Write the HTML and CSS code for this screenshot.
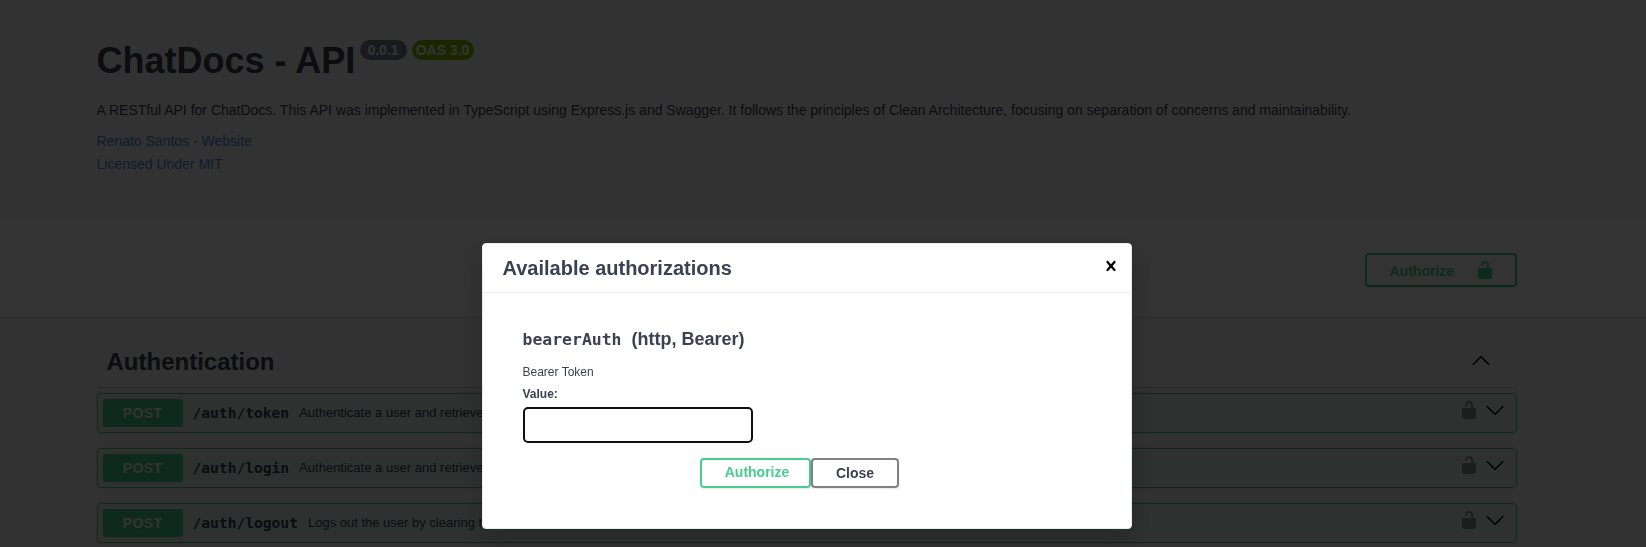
FILE: index.html
```html
<!DOCTYPE html>
<html lang="en">
<head>
<meta charset="utf-8">
<title>ChatDocs - API</title>
<link rel="stylesheet" href="styles.css">
</head>
<body>
<svg width="0" height="0" class="sprite">
  <symbol id="unlocked" viewBox="0 0 20 20"><path d="M15.8 8H14V5.6C14 2.703 12.665 1 10 1 7.334 1 6 2.703 6 5.6V6h2v-.801C8 3.754 8.797 3 10 3c1.203 0 2 .754 2 2.199V8H4c-.553 0-1 .646-1 1.199V17c0 .549.428 1.139.951 1.307l1.197.387C5.672 18.861 6.55 19 7.1 19h5.8c.549 0 1.428-.139 1.951-.307l1.196-.387c.524-.167.953-.757.953-1.306V9.199C17 8.646 16.352 8 15.8 8z"/></symbol>
  <symbol id="arrow-down" viewBox="0 0 20 20"><path d="M17.418 6.109c.272-.268.709-.268.979 0s.271.701 0 .969l-7.908 7.83c-.27.268-.707.268-.979 0l-7.908-7.83c-.27-.268-.27-.701 0-.969.271-.268.709-.268.979 0L10 13.25l7.418-7.141z"/></symbol>
  <symbol id="arrow-up" viewBox="0 0 20 20"><path d="M17.418 14.908c.272.27.709.27.979 0s.271-.697 0-.969l-7.908-7.83c-.27-.268-.707-.268-.979 0l-7.908 7.83c-.27.27-.27.701 0 .969.271.268.709.268.979 0L10 7.767l7.418 7.141z"/></symbol>
  <symbol id="close" viewBox="0 0 20 20"><path d="M14.348 14.849c-.469.469-1.229.469-1.697 0L10 11.819l-2.651 3.029c-.469.469-1.229.469-1.697 0-.469-.469-.469-1.229 0-1.697l2.758-3.15-2.759-3.152c-.469-.469-.469-1.228 0-1.697.469-.469 1.228-.469 1.697 0L10 8.183l2.651-3.031c.469-.469 1.228-.469 1.697 0 .469.469.469 1.229 0 1.697l-2.758 3.152 2.758 3.15c.469.469.469 1.229 0 1.698z"/></symbol>
</svg>
<div class="page">
  <header class="info wrapper">
    <div class="title-row">
      <h1 class="title">ChatDocs - API</h1>
      <span class="version">0.0.1</span>
      <span class="version oas">OAS 3.0</span>
    </div>
    <p class="description">A RESTful API for ChatDocs. This API was implemented in TypeScript using Express.js and Swagger. It follows the principles of Clean Architecture, focusing on separation of concerns and maintainability.</p>
    <a class="link">Renato Santos - Website</a>
    <a class="link">Licensed Under MIT</a>
  </header>
  <section class="scheme">
    <div class="wrapper scheme-inner">
      <button class="btn authorize"><span>Authorize</span><svg class="icon"><use href="#unlocked"/></svg></button>
    </div>
  </section>
  <main class="wrapper operations">
    <div class="tag"><h2 class="tag-name">Authentication</h2><svg class="icon"><use href="#arrow-up"/></svg></div>
    <div class="opblock">
      <span class="method">POST</span><span class="path">/auth/token</span><span class="summary">Authenticate a user and retrieve a token</span>
      <svg class="icon lock"><use href="#unlocked"/></svg><svg class="icon"><use href="#arrow-down"/></svg>
    </div>
    <div class="opblock">
      <span class="method">POST</span><span class="path">/auth/login</span><span class="summary">Authenticate a user and retrieve a token</span>
      <svg class="icon lock"><use href="#unlocked"/></svg><svg class="icon"><use href="#arrow-down"/></svg>
    </div>
    <div class="opblock">
      <span class="method">POST</span><span class="path">/auth/logout</span><span class="summary">Logs out the user by clearing the token</span>
      <svg class="icon lock"><use href="#unlocked"/></svg><svg class="icon"><use href="#arrow-down"/></svg>
    </div>
  </main>
</div>
<div class="backdrop">
  <div class="modal">
    <div class="modal-header"><h3 class="modal-title">Available authorizations</h3><svg class="icon"><use href="#close"/></svg></div>
    <div class="modal-body">
      <h4 class="scheme-name"><code>bearerAuth</code><span>(http, Bearer)</span></h4>
      <p class="hint">Bearer Token</p>
      <label class="value-label" for="token">Value:</label>
      <input class="token" id="token" type="text">
      <div class="actions"><button class="btn modal-authorize">Authorize</button><button class="btn modal-close">Close</button></div>
    </div>
  </div>
</div>
</body>
</html>
```
FILE: styles.css
```css
* { box-sizing: border-box; }
html, body { height: 100%; }
body {
  margin: 0;
  overflow: hidden;
  background: #fafafa;
  color: #3b4151;
  font-family: "Liberation Sans", Arial, sans-serif;
}
h1, h2, h3, h4, p { margin: 0; }
.sprite { position: absolute; }
.icon { width: 20px; height: 20px; flex: none; }
.page { height: 547px; overflow: hidden; }
.wrapper { width: 1420px; margin-left: 96.5px; }

.info { height: 222px; padding-top: 38px; }
.title-row { display: flex; align-items: flex-start; height: 59px; }
.title { font-size: 36px; line-height: 44px; padding-top: 1px; white-space: nowrap; margin-right: 5px; width: 258px; }
.version {
  width: 47px; height: 20px; margin: 2px 5px 0 0;
  border-radius: 10px;
  background: #7d8492;
  color: #fff;
  font-size: 14px; font-weight: 700; line-height: 20px;
  text-align: center; white-space: nowrap;
}
.version.oas { width: 62px; background: #89bf04; }
.description { font-size: 14px; line-height: 26px; height: 33px; white-space: nowrap; }
.link { display: block; font-size: 14px; line-height: 23px; color: #4990e2; }

.scheme { height: 95px; background: #fff; box-shadow: 0 1px 2px 0 rgba(0,0,0,.15); }
.scheme-inner { display: flex; justify-content: flex-end; padding-top: 31px; }
.btn {
  border: 2px solid gray; border-radius: 4px;
  background: transparent;
  box-shadow: 0 1px 2px rgba(0,0,0,.1);
  color: #3b4151;
  font: 700 14px/18px "Liberation Sans", Arial, sans-serif;
}
.authorize {
  display: flex; align-items: center;
  width: 152px; height: 34px; padding: 0 20px 0 23px;
  justify-content: space-between;
  border-color: #49cc90; color: #49cc90; fill: #49cc90;
}
.authorize span { padding-top: 1px; }

.tag {
  display: flex; align-items: center; justify-content: space-between;
  height: 71px; padding: 16px 26px 0 10px; margin-bottom: 5px;
  border-bottom: 1px solid rgba(59,65,81,.3);
}
.tag-name { font-size: 24px; line-height: 28px; padding-top: 3px; }
.opblock {
  display: flex; align-items: center;
  height: 40px; margin-bottom: 15px; padding: 0 11px 0 5px;
  border: 1px solid #49cc90; border-radius: 4px;
  background: rgba(73,204,144,.1);
  box-shadow: 0 0 3px rgba(0,0,0,.19);
  white-space: nowrap;
}
.method {
  width: 80px; height: 28px; border-radius: 3px;
  background: #49cc90; color: #fff;
  font-size: 14px; font-weight: 700; line-height: 28px; text-align: center;
  letter-spacing: .4px;
  text-shadow: 0 1px 0 rgba(0,0,0,.1);
}
.path { margin: 0 10px 0; font: 700 14.6px/20px "DejaVu Sans Mono", monospace; }
.summary { flex: 1; font-size: 13px; line-height: 20px; margin-top: -1px; }
.opblock .icon { margin-top: -7px; }
.opblock .lock { margin-right: 6px; opacity: .4; }

.backdrop {
  position: fixed; inset: 0;
  display: flex; justify-content: center; align-items: flex-start;
  padding: 243px 33px 0 0;
  background: rgba(0,0,0,.8);
}
.modal {
  width: 650px; height: 286px;
  border: 1px solid #ebebeb; border-radius: 4px;
  background: #fff;
  box-shadow: 0 10px 30px 0 rgba(0,0,0,.2);
}
.modal-header {
  display: flex; align-items: center; justify-content: space-between;
  height: 49px; padding: 0 10px 4px 20px;
  border-bottom: 1px solid #ebebeb;
}
.modal-title { font-size: 20px; line-height: 24px; padding-top: 4px; }
.modal-body { padding: 33px 40px 0; }
.scheme-name { display: flex; align-items: baseline; gap: 10px; font-size: 18px; line-height: 26px; }
.scheme-name code { font: 700 16.44px/26px "DejaVu Sans Mono", monospace; }
.hint { font-size: 12px; line-height: 16px; margin-top: 11px; }
.value-label { display: block; font-size: 12px; font-weight: 700; line-height: 16px; margin-top: 6px; }
.token { display: block; width: 230px; height: 36px; margin-top: 5px; border: 2px solid #101010; border-radius: 5px; background: #fff; outline: 0; }
.actions { display: flex; margin: 15px 0 0 177px; }
.actions .btn { height: 30px; padding: 0; }
.actions .modal-authorize { width: 111px; padding: 0 0 2px 4px; border-color: #49cc90; color: #49cc90; }
.actions .modal-close { width: 88px; padding-left: 1px; }
```
